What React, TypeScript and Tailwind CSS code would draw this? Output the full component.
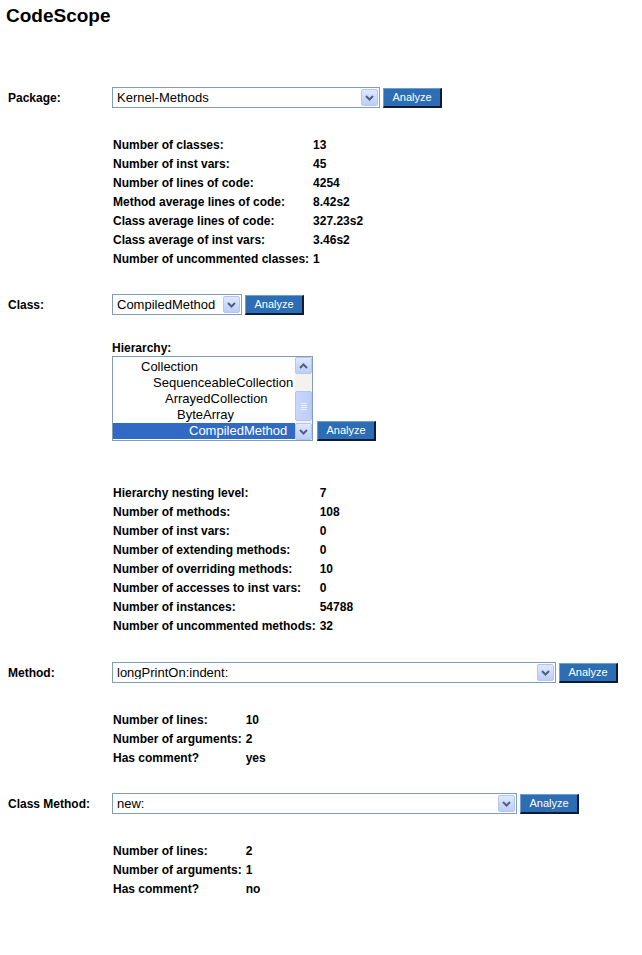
import React from 'react';

type Stat = [string, string];

const packageStats: Stat[] = [
  ['Number of classes:', '13'],
  ['Number of inst vars:', '45'],
  ['Number of lines of code:', '4254'],
  ['Method average lines of code:', '8.42s2'],
  ['Class average lines of code:', '327.23s2'],
  ['Class average of inst vars:', '3.46s2'],
  ['Number of uncommented classes:', '1'],
];

const classStats: Stat[] = [
  ['Hierarchy nesting level:', '7'],
  ['Number of methods:', '108'],
  ['Number of inst vars:', '0'],
  ['Number of extending methods:', '0'],
  ['Number of overriding methods:', '10'],
  ['Number of accesses to inst vars:', '0'],
  ['Number of instances:', '54788'],
  ['Number of uncommented methods:', '32'],
];

const methodStats: Stat[] = [
  ['Number of lines:', '10'],
  ['Number of arguments:', '2'],
  ['Has comment?', 'yes'],
];

const classMethodStats: Stat[] = [
  ['Number of lines:', '2'],
  ['Number of arguments:', '1'],
  ['Has comment?', 'no'],
];

// indent classes are written out so tailwind picks them up
const hierarchy = [
  { name: 'Collection', indent: 'pl-[28px]' },
  { name: 'SequenceableCollection', indent: 'pl-[40px]' },
  { name: 'ArrayedCollection', indent: 'pl-[52px]' },
  { name: 'ByteArray', indent: 'pl-[64px]' },
  { name: 'CompiledMethod', indent: 'pl-[76px]', selected: true },
];

function Chevron({ up = false }: { up?: boolean }) {
  return (
    <svg width="9" height="6" viewBox="0 0 9 6" className="block">
      <polyline
        points={up ? '1,5 4.5,1.5 8,5' : '1,1 4.5,4.5 8,1'}
        fill="none"
        stroke="#4d6185"
        strokeWidth="2"
      />
    </svg>
  );
}

function XpButton({ up = false }: { up?: boolean }) {
  return (
    <span className="flex h-[17px] w-[17px] shrink-0 items-center justify-center rounded-[2px] border border-[#b3c5f1] bg-linear-to-b from-[#dfe8fe] to-[#bccdf8]">
      <Chevron up={up} />
    </span>
  );
}

function AnalyzeButton() {
  return (
    <button
      type="button"
      className="ml-[3px] flex h-[20px] w-[59px] shrink-0 items-center justify-center border border-t-[#6e9fd4] border-l-[#6e9fd4] border-r-2 border-b-2 border-r-[#0c1b38] border-b-[#0c1b38] bg-[#2c6db3] text-[11px] leading-none text-white"
    >
      Analyze
    </button>
  );
}

function SelectBox({ value, width }: { value: string; width: string }) {
  return (
    <div className={`flex h-[21px] shrink-0 items-center border border-[#7f9db9] bg-white ${width}`}>
      <span className="flex-1 truncate pl-[4px] text-[13px] leading-none">{value}</span>
      <span className="mr-[1px]">
        <XpButton />
      </span>
    </div>
  );
}

function FieldRow({ label, children }: { label: string; children: React.ReactNode }) {
  return (
    <div className="flex items-center">
      <div className="w-[112px] shrink-0 pl-[8px] text-[12px] font-bold">{label}</div>
      {children}
    </div>
  );
}

function StatsTable({ rows }: { rows: Stat[] }) {
  return (
    <div className="ml-[113px] grid grid-cols-[max-content_max-content] gap-x-[4px] text-[12px] font-bold leading-[19px]">
      {rows.map(([k, v]) => (
        <React.Fragment key={k}>
          <div className="h-[19px]">{k}</div>
          <div className="h-[19px]">{v}</div>
        </React.Fragment>
      ))}
    </div>
  );
}

function HierarchyList() {
  return (
    <div className="flex h-[85px] w-[201px] border border-[#7f9db9] bg-white">
      <div className="flex-1 overflow-hidden pt-[2px]">
        {hierarchy.map((item) => (
          <div
            key={item.name}
            className={`h-[16px] whitespace-nowrap text-[13px] leading-[16px] ${item.indent} ${
              item.selected ? 'bg-[#316ac5] text-white' : ''
            }`}
          >
            {item.name}
          </div>
        ))}
      </div>
      {/* xp style scrollbar */}
      <div className="flex w-[17px] flex-col bg-[#f3f2ec]">
        <XpButton up />
        <div className="flex-1 pt-[17px]">
          <div className="flex h-[30px] flex-col items-center justify-center gap-[1px] rounded-[2px] border border-[#b3c5f1] bg-linear-to-r from-[#c9d7fd] to-[#bccdf8]">
            <span className="h-px w-[6px] bg-[#eef3ff]" />
            <span className="h-px w-[6px] bg-[#eef3ff]" />
            <span className="h-px w-[6px] bg-[#eef3ff]" />
            <span className="h-px w-[6px] bg-[#eef3ff]" />
          </div>
        </div>
        <XpButton />
      </div>
    </div>
  );
}

export default function App() {
  return (
    <div className="min-h-[955px] w-[642px] bg-white font-['Liberation_Sans',Arial,sans-serif] text-black">
      <h1 className="h-[32px] pl-[6px] text-[19px] font-bold leading-[32px]">CodeScope</h1>

      <div className="mt-[55px]">
        <FieldRow label="Package:">
          <SelectBox value="Kernel-Methods" width="w-[268px]" />
          <AnalyzeButton />
        </FieldRow>
      </div>

      <div className="mt-[28px]">
        <StatsTable rows={packageStats} />
      </div>

      <div className="mt-[25px]">
        <FieldRow label="Class:">
          <SelectBox value="CompiledMethod" width="w-[130px]" />
          <AnalyzeButton />
        </FieldRow>
      </div>

      <div className="ml-[112px] mt-[26px]">
        <div className="h-[15px] text-[12px] font-bold leading-[15px]">Hierarchy:</div>
        <div className="flex items-end">
          <HierarchyList />
          <span className="ml-[1px]">
            <AnalyzeButton />
          </span>
        </div>
      </div>

      <div className="mt-[43px]">
        <StatsTable rows={classStats} />
      </div>

      <div className="mt-[26px]">
        <FieldRow label="Method:">
          <SelectBox value="longPrintOn:indent:" width="w-[444px]" />
          <AnalyzeButton />
        </FieldRow>
      </div>

      <div className="mt-[28px]">
        <StatsTable rows={methodStats} />
      </div>

      <div className="mt-[25px]">
        <FieldRow label="Class Method:">
          <SelectBox value="new:" width="w-[405px]" />
          <AnalyzeButton />
        </FieldRow>
      </div>

      <div className="mt-[28px]">
        <StatsTable rows={classMethodStats} />
      </div>
    </div>
  );
}
